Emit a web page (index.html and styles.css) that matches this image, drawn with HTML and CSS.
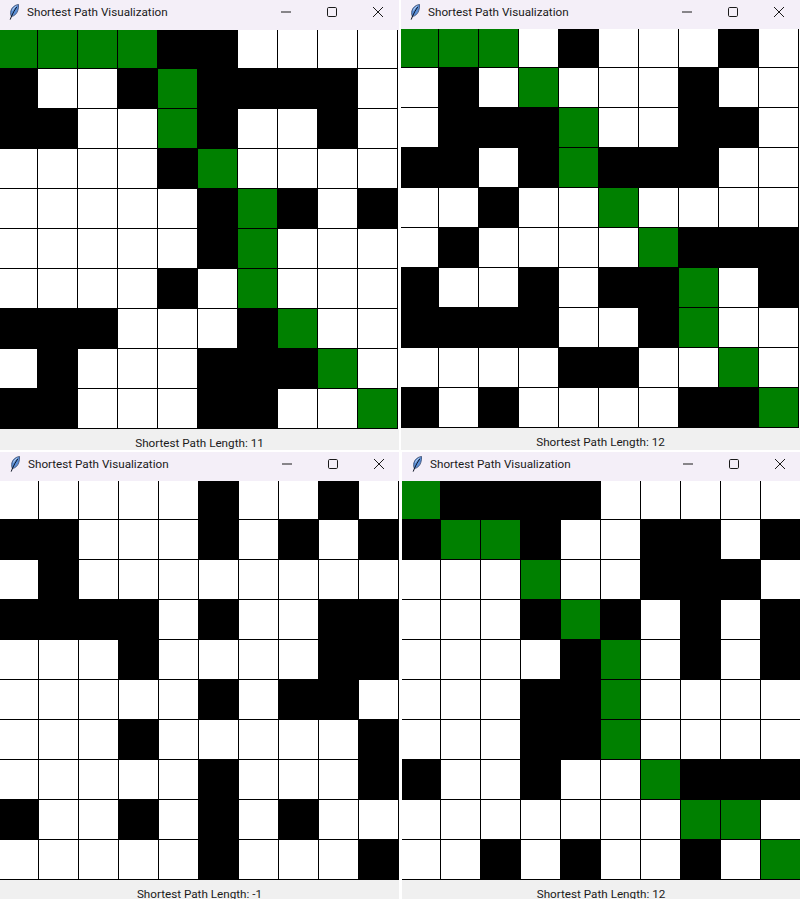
FILE: index.html
```html
<!DOCTYPE html>
<html lang="en">
<head>
    <meta charset="UTF-8">
    <meta name="viewport" content="width=device-width, initial-scale=1.0">
    <title>Shortest Path Visualization</title>
    <link rel="stylesheet" href="styles.css">
</head>
<body>

    <svg class="defs" width="0" height="0" aria-hidden="true">
        <symbol id="feather" viewBox="0 0 10 16">
            <path d="M9.6 .4C6 .8 2.6 3.4 1.8 7 1.4 9 1.6 11 2.4 12.6 5.4 12 8 9.6 8.8 6.6 9.4 4.6 9.8 2.4 9.6 .4Z" fill="#5b8fd6" stroke="#2a3a5c" stroke-width=".7"/>
            <path d="M3.4 6.6C4.2 4.6 5.6 3 7.4 2" fill="none" stroke="#c4d8f2" stroke-width=".9"/>
            <path d="M7.8 2.8 5 7.2 2.6 12 1.2 15.6" fill="none" stroke="#0d1424" stroke-width="1"/>
        </symbol>
        <symbol id="ctl-min" viewBox="0 0 12 12"><path d="M1 6H11" stroke="#1a1a1a" fill="none"/></symbol>
        <symbol id="ctl-max" viewBox="0 0 12 12"><rect x="1.5" y="1.5" width="9" height="9" rx="1.2" stroke="#1a1a1a" fill="none"/></symbol>
        <symbol id="ctl-close" viewBox="0 0 12 12"><path d="M1 1 11 11M11 1 1 11" stroke="#1a1a1a" fill="none"/></symbol>
    </svg>

    <div class="desktop">

        <!-- top left -->
        <section class="window top tall">
            <header class="titlebar">
                <svg class="feather"><use href="#feather"/></svg>
                <span class="title">Shortest Path Visualization</span>
                <div class="controls">
                    <svg><use href="#ctl-min"/></svg>
                    <svg><use href="#ctl-max"/></svg>
                    <svg><use href="#ctl-close"/></svg>
                </div>
            </header>
            <div class="canvas">
                <div class="board">
                    <i class="g"></i><i class="g"></i><i class="g"></i><i class="g"></i><i class="k"></i><i class="k"></i><i></i><i></i><i></i><i></i>
                    <i class="k"></i><i></i><i></i><i class="k"></i><i class="g"></i><i class="k"></i><i class="k"></i><i class="k"></i><i class="k"></i><i></i>
                    <i class="k"></i><i class="k"></i><i></i><i></i><i class="g"></i><i class="k"></i><i></i><i></i><i class="k"></i><i></i>
                    <i></i><i></i><i></i><i></i><i class="k"></i><i class="g"></i><i></i><i></i><i></i><i></i>
                    <i></i><i></i><i></i><i></i><i></i><i class="k"></i><i class="g"></i><i class="k"></i><i></i><i class="k"></i>
                    <i></i><i></i><i></i><i></i><i></i><i class="k"></i><i class="g"></i><i></i><i></i><i></i>
                    <i></i><i></i><i></i><i></i><i class="k"></i><i></i><i class="g"></i><i></i><i></i><i></i>
                    <i class="k"></i><i class="k"></i><i class="k"></i><i></i><i></i><i></i><i class="k"></i><i class="g"></i><i></i><i></i>
                    <i></i><i class="k"></i><i></i><i></i><i></i><i class="k"></i><i class="k"></i><i class="k"></i><i class="g"></i><i></i>
                    <i class="k"></i><i class="k"></i><i></i><i></i><i></i><i class="k"></i><i class="k"></i><i></i><i></i><i class="g"></i>
                </div>
            </div>
            <p class="status">Shortest Path Length: 11</p>
        </section>

        <!-- top right -->
        <section class="window top">
            <header class="titlebar">
                <svg class="feather"><use href="#feather"/></svg>
                <span class="title">Shortest Path Visualization</span>
                <div class="controls">
                    <svg><use href="#ctl-min"/></svg>
                    <svg><use href="#ctl-max"/></svg>
                    <svg><use href="#ctl-close"/></svg>
                </div>
            </header>
            <div class="canvas">
                <div class="board">
                    <i class="g"></i><i class="g"></i><i class="g"></i><i></i><i class="k"></i><i></i><i></i><i></i><i class="k"></i><i></i>
                    <i></i><i class="k"></i><i></i><i class="g"></i><i></i><i></i><i></i><i class="k"></i><i></i><i></i>
                    <i></i><i class="k"></i><i class="k"></i><i class="k"></i><i class="g"></i><i></i><i></i><i class="k"></i><i class="k"></i><i></i>
                    <i class="k"></i><i class="k"></i><i></i><i class="k"></i><i class="g"></i><i class="k"></i><i class="k"></i><i class="k"></i><i></i><i></i>
                    <i></i><i></i><i class="k"></i><i></i><i></i><i class="g"></i><i></i><i></i><i></i><i></i>
                    <i></i><i class="k"></i><i></i><i></i><i></i><i></i><i class="g"></i><i class="k"></i><i class="k"></i><i class="k"></i>
                    <i class="k"></i><i></i><i></i><i class="k"></i><i></i><i class="k"></i><i class="k"></i><i class="g"></i><i></i><i class="k"></i>
                    <i class="k"></i><i class="k"></i><i class="k"></i><i class="k"></i><i></i><i></i><i class="k"></i><i class="g"></i><i></i><i></i>
                    <i></i><i></i><i></i><i></i><i class="k"></i><i class="k"></i><i></i><i></i><i class="g"></i><i></i>
                    <i class="k"></i><i></i><i class="k"></i><i></i><i></i><i></i><i></i><i class="k"></i><i class="k"></i><i class="g"></i>
                </div>
            </div>
            <p class="status">Shortest Path Length: 12</p>
        </section>

        <!-- bottom left -->
        <section class="window bottom">
            <header class="titlebar">
                <svg class="feather"><use href="#feather"/></svg>
                <span class="title">Shortest Path Visualization</span>
                <div class="controls">
                    <svg><use href="#ctl-min"/></svg>
                    <svg><use href="#ctl-max"/></svg>
                    <svg><use href="#ctl-close"/></svg>
                </div>
            </header>
            <div class="canvas">
                <div class="board">
                    <i></i><i></i><i></i><i></i><i></i><i class="k"></i><i></i><i></i><i class="k"></i><i></i>
                    <i class="k"></i><i class="k"></i><i></i><i></i><i></i><i class="k"></i><i></i><i class="k"></i><i></i><i class="k"></i>
                    <i></i><i class="k"></i><i></i><i></i><i></i><i></i><i></i><i></i><i></i><i></i>
                    <i class="k"></i><i class="k"></i><i class="k"></i><i class="k"></i><i></i><i class="k"></i><i></i><i></i><i class="k"></i><i class="k"></i>
                    <i></i><i></i><i></i><i class="k"></i><i></i><i></i><i></i><i></i><i class="k"></i><i class="k"></i>
                    <i></i><i></i><i></i><i></i><i></i><i class="k"></i><i></i><i class="k"></i><i class="k"></i><i></i>
                    <i></i><i></i><i></i><i class="k"></i><i></i><i></i><i></i><i></i><i></i><i class="k"></i>
                    <i></i><i></i><i></i><i></i><i></i><i class="k"></i><i></i><i></i><i></i><i class="k"></i>
                    <i class="k"></i><i></i><i></i><i class="k"></i><i></i><i class="k"></i><i></i><i class="k"></i><i></i><i></i>
                    <i></i><i></i><i></i><i></i><i></i><i class="k"></i><i></i><i></i><i></i><i class="k"></i>
                </div>
            </div>
            <p class="status">Shortest Path Length: -1</p>
        </section>

        <!-- bottom right -->
        <section class="window bottom inset">
            <header class="titlebar">
                <svg class="feather"><use href="#feather"/></svg>
                <span class="title">Shortest Path Visualization</span>
                <div class="controls">
                    <svg><use href="#ctl-min"/></svg>
                    <svg><use href="#ctl-max"/></svg>
                    <svg><use href="#ctl-close"/></svg>
                </div>
            </header>
            <div class="canvas">
                <div class="board">
                    <i class="g"></i><i class="k"></i><i class="k"></i><i class="k"></i><i class="k"></i><i></i><i></i><i></i><i></i><i></i>
                    <i class="k"></i><i class="g"></i><i class="g"></i><i class="k"></i><i></i><i></i><i class="k"></i><i class="k"></i><i></i><i class="k"></i>
                    <i></i><i></i><i></i><i class="g"></i><i></i><i></i><i class="k"></i><i class="k"></i><i class="k"></i><i></i>
                    <i></i><i></i><i></i><i class="k"></i><i class="g"></i><i class="k"></i><i></i><i class="k"></i><i></i><i class="k"></i>
                    <i></i><i></i><i></i><i></i><i class="k"></i><i class="g"></i><i></i><i class="k"></i><i></i><i class="k"></i>
                    <i></i><i></i><i></i><i class="k"></i><i class="k"></i><i class="g"></i><i></i><i></i><i></i><i></i>
                    <i></i><i></i><i></i><i class="k"></i><i class="k"></i><i class="g"></i><i></i><i></i><i></i><i></i>
                    <i class="k"></i><i></i><i></i><i class="k"></i><i></i><i></i><i class="g"></i><i class="k"></i><i class="k"></i><i class="k"></i>
                    <i></i><i></i><i></i><i></i><i></i><i></i><i></i><i class="g"></i><i class="g"></i><i></i>
                    <i></i><i></i><i class="k"></i><i></i><i class="k"></i><i></i><i></i><i class="k"></i><i></i><i class="g"></i>
                </div>
            </div>
            <p class="status">Shortest Path Length: 12</p>
        </section>

    </div>

</body>
</html>
```

FILE: styles.css
```css
html, body {
    margin: 0;
    height: 899px;
    overflow: hidden;
    background: #fff;
}

.defs {
    display: block;
}

.desktop {
    display: grid;
    grid-template-columns: 399px 399px;
    grid-template-rows: 450px 447px;
    column-gap: 2px;
    row-gap: 2px;
    font-family: Roboto, "Open Sans", sans-serif;
}

.window {
    display: flex;
    flex-direction: column;
    overflow: hidden;
    background: #f0f0f0;
}

.inset {
    margin-left: 1px;
}

/* title bar */
.titlebar {
    flex: none;
    display: flex;
    align-items: center;
    box-sizing: border-box;
    height: 29px;
    padding-left: 9px;
    padding-bottom: 5px;
    background: #f4eff8;
    color: #1a1a1a;
    font-size: 11.7px;
}

.tall .titlebar {
    height: 30px;
    padding-bottom: 6px;
}

.feather {
    flex: none;
    width: 10px;
    height: 16px;
    margin-right: 8px;
}

.bottom .feather {
    margin-left: 1px;
}

.title {
    flex: 1;
    white-space: nowrap;
}

.controls {
    display: flex;
    gap: 34px;
    margin-right: 15px;
}

.bottom .controls {
    margin-right: 14px;
}

.controls svg {
    display: block;
    width: 12px;
    height: 12px;
}

/* board */
.canvas {
    flex: none;
    height: 399px;
    overflow: hidden;
    background: #fff;
}

.board {
    display: grid;
    grid-template-columns: repeat(10, 40px);
    grid-auto-rows: 40px;
    margin-top: -1px;
}

.top .board {
    margin-left: -2px;
}

.bottom .board {
    margin-left: -1px;
}

.board i {
    display: block;
    box-sizing: border-box;
    border-right: 1px solid #000;
    border-bottom: 1px solid #000;
    background: #fff;
}

.board .k {
    background: #000;
}

.board .g {
    background: #008000;
}

/* label under the canvas */
.status {
    margin: 0;
    padding-top: 6px;
    text-align: center;
    font-size: 11.7px;
    line-height: 16px;
    color: #1a1a1a;
}
```
